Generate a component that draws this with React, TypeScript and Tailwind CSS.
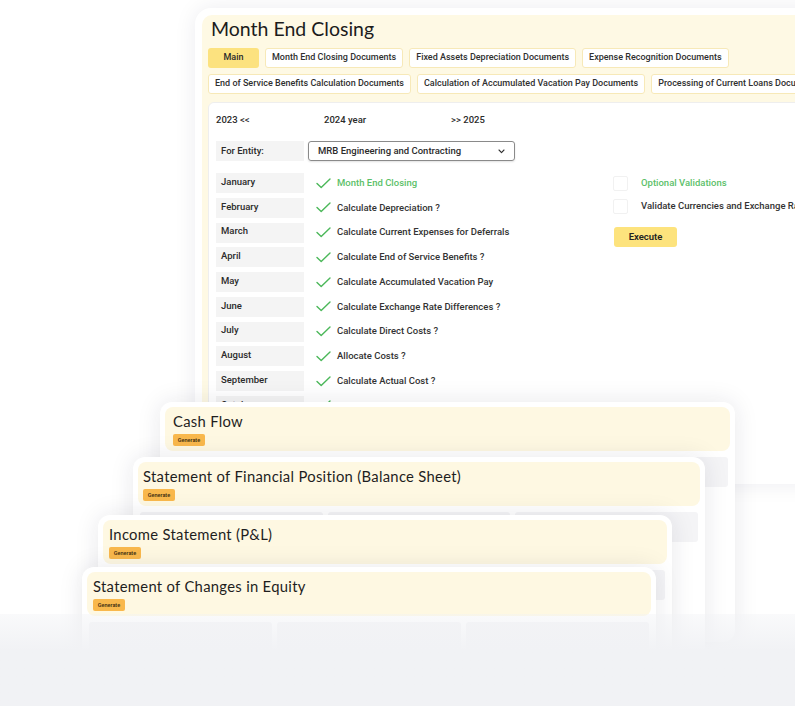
import React from 'react';

const body = { fontFamily: 'Roboto, "Noto Sans", sans-serif' };
const heading = { fontFamily: 'Lato, "Open Sans", sans-serif' };

const tabsRow1 = ['Month End Closing Documents', 'Fixed Assets Depreciation Documents', 'Expense Recognition Documents'];
const tabsRow2 = [
  'End of Service Benefits Calculation Documents',
  'Calculation of Accumulated Vacation Pay Documents',
  'Processing of Current Loans Documents',
];

const months = [
  { name: 'January', task: 'Month End Closing', highlight: true },
  { name: 'February', task: 'Calculate Depreciation ?' },
  { name: 'March', task: 'Calculate Current Expenses for Deferrals' },
  { name: 'April', task: 'Calculate End of Service Benefits ?' },
  { name: 'May', task: 'Calculate Accumulated Vacation Pay' },
  { name: 'June', task: 'Calculate Exchange Rate Differences ?' },
  { name: 'July', task: 'Calculate Direct Costs ?' },
  { name: 'August', task: 'Allocate Costs ?' },
  { name: 'September', task: 'Calculate Actual Cost ?' },
  { name: 'October', task: 'Close Period ?' },
  { name: 'November', task: 'Post Entries ?' },
];

// Thin green tick used beside each step
function Check() {
  return (
    <svg width="15" height="11" viewBox="0 0 15 11" fill="none">
      <path d="M1 5.5L5.2 9.6L14 1" stroke="#4cb85a" strokeWidth="1.4" strokeLinecap="round" strokeLinejoin="round" />
    </svg>
  );
}

function Tab({ label, active = false }: { label: string; active?: boolean }) {
  return (
    <div
      className={`h-[20px] flex items-center rounded-[3px] text-[9px] font-medium whitespace-nowrap ${
        active ? 'w-[51px] justify-center bg-[#fce27f] text-[#2a2a2a]' : 'px-[6px] bg-white border border-[#f7e9b8] text-[#2f2f2f]'
      }`}
    >
      {label}
    </div>
  );
}

interface ReportCardProps {
  title: string;
  z: string;
  pos: string;
  pad: string;
}

/**
 * One of the stacked report windows in the lower half
 */
function ReportCard({ title, z, pos, pad }: ReportCardProps) {
  return (
    <div className={`absolute ${pos} ${z} h-[240px] rounded-[12px] bg-white p-[5px] shadow-[0_0_24px_rgba(30,30,60,0.10)]`}>
      <div className={`h-[44px] rounded-[8px] bg-[#fef8e2] ${pad} pt-[4px]`}>
        <div style={heading} className="text-[14.8px] leading-[20px] tracking-[0.3px] text-[#1e1e1e]">
          {title}
        </div>
        <div
          style={body}
          className="mt-[3px] w-[32px] h-[12px] flex items-center justify-center rounded-[2px] bg-[#f9b84c] text-[5.5px] font-medium text-[#3a2a10]"
        >
          Generate
        </div>
      </div>
      <div className="mt-[6px] flex gap-[5px] px-[2px]">
        <div className="h-[30px] flex-1 rounded-[3px] bg-[#f4f4f6]" />
        <div className="h-[30px] flex-1 rounded-[3px] bg-[#f4f4f6]" />
        <div className="h-[30px] flex-1 rounded-[3px] bg-[#f4f4f6]" />
      </div>
    </div>
  );
}

export default function App() {
  return (
    <div style={body} className="relative w-[795px] h-[706px] overflow-hidden bg-white">
      {/* Main window */}
      <div className="absolute left-[195px] top-[8px] w-[660px] h-[476px] rounded-[16px] bg-white p-[7px] shadow-[0_0_22px_rgba(30,30,60,0.08)]">
        <div className="h-full rounded-[10px] bg-[#fef9e4] pl-[6px] pt-[2px] overflow-hidden">
          <div style={heading} className="pl-[3px] text-[19.5px] leading-[24px] text-[#1c1c1c]">
            Month End Closing
          </div>

          <div className="mt-[7px] flex gap-[6px]">
            <Tab label="Main" active />
            {tabsRow1.map(t => (
              <Tab key={t} label={t} />
            ))}
          </div>
          <div className="mt-[6px] flex gap-[6px]">
            {tabsRow2.map(t => (
              <Tab key={t} label={t} />
            ))}
          </div>

          <div className="mt-[8px] h-[400px] rounded-tl-[6px] border border-[#eeeeee] bg-white pl-[7px] pt-[10px] text-[9.5px] font-medium text-[#2b2b2b]">
            <div className="flex h-[14px] items-center">
              <span className="w-[108px]">2023 &lt;&lt;</span>
              <span className="w-[127px]">2024 year</span>
              <span>&gt;&gt; 2025</span>
            </div>

            <div className="mt-[14px] flex gap-[4px]">
              <div className="w-[88px] h-[20px] flex items-center pl-[5px] bg-[#f4f4f4]">For Entity:</div>
              <div className="w-[207px] h-[20px] flex items-center justify-between pl-[9px] pr-[9px] rounded-[3px] border border-[#8a8a8a] shadow-[0_1px_2px_rgba(0,0,0,0.12)]">
                <span>MRB Engineering and Contracting</span>
                <svg width="7" height="5" viewBox="0 0 7 5" fill="none">
                  <path d="M1 1L3.5 3.6L6 1" stroke="#333" strokeWidth="1.1" strokeLinecap="round" strokeLinejoin="round" />
                </svg>
              </div>
            </div>

            <div className="mt-[12px] flex">
              <div className="w-[397px] flex flex-col gap-[4.75px]">
                {months.map(m => (
                  <div key={m.name} className="flex h-[20px] items-center">
                    <div className="w-[88px] h-[20px] flex items-center pl-[5px] pb-[2px] bg-[#f4f4f4]">{m.name}</div>
                    <div className="ml-[12px] w-[21px]">
                      <Check />
                    </div>
                    <span className={m.highlight ? 'text-[#5cbf69]' : 'text-[#333333]'}>{m.task}</span>
                  </div>
                ))}
              </div>

              <div className="flex flex-col">
                <div className="flex h-[20px] items-center gap-[13px]">
                  <div className="w-[15px] h-[15px] rounded-[2px] border border-[#f1f1f1]" />
                  <span className="text-[#5cbf69]">Optional Validations</span>
                </div>
                <div className="mt-[3px] flex h-[20px] items-center gap-[13px]">
                  <div className="w-[15px] h-[15px] rounded-[2px] border border-[#f1f1f1]" />
                  <span className="whitespace-nowrap text-[#333333]">Validate Currencies and Exchange Rates</span>
                </div>
                <button className="mt-[11px] ml-[1px] w-[63px] h-[20px] rounded-[3px] bg-[#fde37d] text-[9.5px] font-semibold text-[#222]">
                  Execute
                </button>
              </div>
            </div>
          </div>
        </div>
      </div>

      {/* Stacked report windows */}
      <ReportCard title="Cash Flow" z="z-10" pos="left-[160px] top-[402px] w-[575px]" pad="pl-[8px]" />
      <ReportCard
        title="Statement of Financial Position (Balance Sheet)"
        z="z-20"
        pos="left-[133px] top-[457px] w-[572px]"
        pad="pl-[5px]"
      />
      <ReportCard title="Income Statement (P&L)" z="z-30" pos="left-[98px] top-[515px] w-[574px]" pad="pl-[6px]" />
      <ReportCard title="Statement of Changes in Equity" z="z-40" pos="left-[82px] top-[567px] w-[574px]" pad="pl-[6px]" />

      {/* Bottom fade */}
      <div className="absolute inset-x-0 top-[614px] bottom-0 z-50 bg-linear-to-b from-[#f1f2f5]/40 via-[#f1f2f5] via-40% to-[#f1f2f5]" />
    </div>
  );
}
